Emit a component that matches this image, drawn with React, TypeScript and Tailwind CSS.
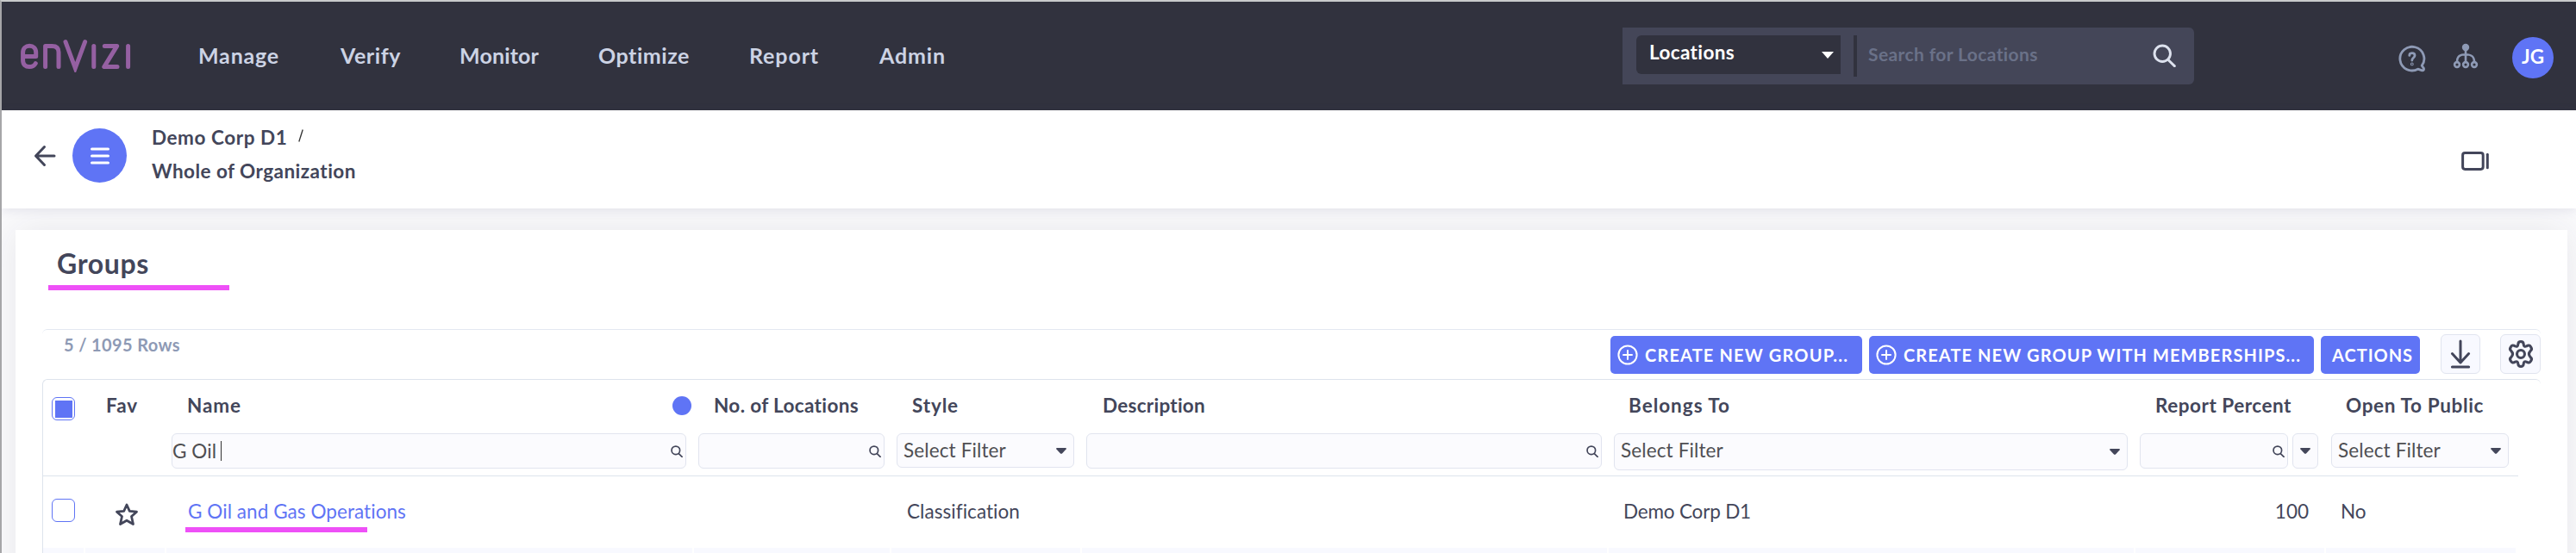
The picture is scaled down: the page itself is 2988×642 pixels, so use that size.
import type { ReactNode } from 'react';

const headText = 'block whitespace-nowrap text-[22.5px] leading-[28px] font-bold text-[#43465a]';
const cellText = 'block whitespace-nowrap text-[22.5px] leading-[28px] text-[#43465a]';
const columns = 'grid grid-cols-[49px_94px_612px_229px_221px_611px_611px_221px_220px]';

function Logo() {
  return (
    <svg className="h-[38px] w-[128px]" viewBox="24 46 128 38" fill="none" stroke="#9560a2" strokeWidth="5" strokeLinecap="round" strokeLinejoin="round">
      <path d="M27 65.5H41.7V61C41.7 56 38.5 53.2 34.2 53.2S26.6 56 26.6 61V70C26.6 75 29.5 77.6 34 77.6C37.6 77.6 40 76 41.3 73.6" />
      <path d="M52.6 77.5V53.4H60.5C65.5 53.4 68 56 68 60.5V77.5" />
      <path d="M76 48.6L87.3 79L98.6 48.6" strokeLinejoin="miter" />
      <path d="M108.8 53.4V77.5M121.3 53.4H135.7L120.8 77.6H136M148.6 53.4V77.5" />
    </svg>
  );
}

function Search({ className, width }: { className: string; width: number }) {
  return (
    <svg className={className} viewBox="0 0 24 24" fill="none" stroke="currentColor" strokeWidth={width} strokeLinecap="round">
      <circle cx="10" cy="10" r="8.2" />
      <path d="M16 16.5L22.5 22.8" />
    </svg>
  );
}

function Caret({ className }: { className: string }) {
  return (
    <svg className={className} viewBox="0 0 12 7" fill="currentColor" preserveAspectRatio="none">
      <path d="M0.8 0H11.2Q12.2 .5 11.6 1.4L7.2 6.3Q6 7.4 4.8 6.3L.4 1.4Q-.2 .5 .8 0Z" />
    </svg>
  );
}

function HelpIcon() {
  return (
    <svg className="h-8 w-8" viewBox="0 0 32 32" fill="none" stroke="#8e9ab5" strokeWidth="2.8" strokeLinecap="round" strokeLinejoin="round">
      <path d="M27.2 24.2A14 13.8 0 1 0 22.6 28.2L27.6 29.9Q30 29.6 29.4 27.4Z" />
      <path d="M12.8 12.4C12.8 10.4 14 9.6 15.8 9.6C17.8 9.6 19 10.7 19 12.4C19 15 15.8 15 15.8 18" />
      <circle cx="15.8" cy="22.4" r=".5" />
    </svg>
  );
}

function TreeIcon() {
  return (
    <svg className="h-[30px] w-[30px]" viewBox="0 0 30 30" fill="none" stroke="#8e9ab5" strokeWidth="2.6">
      <circle cx="15" cy="5" r="4.2" fill="#8e9ab5" stroke="none" />
      <path d="M15 8V22M5 22C5 15 8.5 13.2 15 13.2S25 15 25 22" />
      <circle cx="5" cy="25" r="2.9" />
      <circle cx="15" cy="25" r="2.9" />
      <circle cx="25" cy="25" r="2.9" />
    </svg>
  );
}

function PlusCircle() {
  return (
    <svg className="h-6 w-6 shrink-0" viewBox="0 0 24 24" fill="none" stroke="white" strokeWidth="2" strokeLinecap="round">
      <circle cx="12" cy="12" r="10.6" />
      <path d="M12 7V17M7 12H17" />
    </svg>
  );
}

function SearchField({ className, children }: { className: string; children?: ReactNode }) {
  return (
    <div className={`flex h-[41px] items-center rounded-md border border-[#e1e4ef] bg-[#fbfbfe] ${className}`}>
      {children}
      <Search className="mr-[3px] ml-auto h-[14px] w-[14px] text-[#43465a]" width={2.9} />
    </div>
  );
}

function SelectField({ className }: { className: string }) {
  return (
    <div className={`flex rounded-md border border-[#e1e4ef] bg-[#fbfbfe] pr-2 pl-[7px] ${className}`}>
      <span className="mt-[5px] whitespace-nowrap text-[22.5px] leading-[28px] tracking-[0.13px] text-[#4f4f52]">Select Filter</span>
      <Caret className="mt-[0.5px] ml-auto h-[7px] w-3 self-center text-[#43465a]" />
    </div>
  );
}

function ActionButton({ children, className }: { children: ReactNode; className: string }) {
  return (
    <button className={`flex h-11 items-center gap-2 rounded-[5px] bg-[#5f74f5] text-[20px] leading-[28px] font-bold whitespace-nowrap text-white ${className}`}>
      {children}
    </button>
  );
}

function Header() {
  return (
    <header className="flex h-[126px] items-start bg-[#31323e] text-[25px] leading-[32px] font-bold text-[#ccd3e4]">
      <div className="mt-[44px] ml-[22px] w-[206px]">
        <Logo />
      </div>
      <nav className="mt-[46px] flex whitespace-nowrap">
        <span className="w-[165px] tracking-[0.82px]">Manage</span>
        <span className="w-[138px] tracking-[0.57px]">Verify</span>
        <span className="w-[161px] tracking-[0.15px]">Monitor</span>
        <span className="w-[175px] tracking-[0.55px]">Optimize</span>
        <span className="w-[151px] tracking-[0.87px]">Report</span>
        <span className="tracking-[0.86px]">Admin</span>
      </nav>
      <div className="mt-[30px] ml-auto flex h-[66px] w-[663px] items-start rounded-r-md bg-[#444658] pt-[9px] pl-4">
        <div className="flex h-[45px] w-[237px] items-start rounded-l-md bg-[#31323e] pr-2 pl-[15px]">
          <span className="mt-[6px] text-[22.5px] leading-[28px] tracking-[0.36px] text-white">Locations</span>
          <svg className="mt-[19px] ml-auto h-2 w-[14px]" viewBox="0 0 14 8" fill="white">
            <path d="M0 0H14L7 8Z" />
          </svg>
        </div>
        <div className="ml-[15px] h-12 w-1 bg-[#31323e]" />
        <span className="mt-[8px] ml-[13px] text-[21px] leading-[28px] tracking-[0.39px] text-[#6a7188]">Search for Locations</span>
        <Search className="mt-[10px] mr-[21px] ml-auto h-[27px] w-[27px] text-[#dde2ee]" width={2.6} />
      </div>
      <div className="mr-[26px] ml-[237px] flex">
        <div className="mt-[50px] w-[63px]">
          <HelpIcon />
        </div>
        <div className="mt-[48px] w-[69px]">
          <TreeIcon />
        </div>
        <div className="mt-[41px] flex h-12 w-[48px] justify-center rounded-full bg-[#5f74f5] pt-[9px] text-[22.5px] leading-[28px] text-white">JG</div>
      </div>
    </header>
  );
}

function Breadcrumb() {
  return (
    <section className="relative z-10 flex h-[114px] items-start bg-white shadow-[0_2px_12px_rgba(60,60,110,0.12)]">
      <svg className="mt-[40px] ml-[37px] h-[26px] w-[26px]" viewBox="0 0 26 26" fill="none" stroke="#43465a" strokeWidth="3" strokeLinecap="round" strokeLinejoin="round">
        <path d="M24 13H2.5M12.5 2.5L2.5 13L12.5 23.5" />
      </svg>
      <div className="mt-[21px] ml-[19px] flex h-[63px] w-[63px] items-center justify-center rounded-full bg-[#5f74f5]">
        <svg className="h-5 w-[22px]" viewBox="0 0 22 20" stroke="white" strokeWidth="3" strokeLinecap="round">
          <path d="M1.5 2H20.5M1.5 10H20.5M1.5 18H20.5" />
        </svg>
      </div>
      <div className="mt-[18px] ml-[29px]">
        <div className="flex">
          <span className={`${headText} tracking-[0.56px]`}>Demo Corp D1</span>
          <svg className="mt-[4px] ml-[13px] h-[15px] w-[6px]" viewBox="0 0 6 15" stroke="#333" strokeWidth="1.3">
            <path d="M5.2 .5L.8 14.5" />
          </svg>
        </div>
        <span className={`${headText} mt-[11px] tracking-[0.46px]`}>Whole of Organization</span>
      </div>
      <svg className="mt-[48px] mr-[100px] ml-auto h-[22px] w-[33px]" viewBox="0 0 33 22" fill="none" stroke="#43465a" strokeWidth="3" strokeLinecap="round">
        <rect x="1.6" y="1.6" width="23.6" height="18.8" rx="2.6" />
        <path d="M30.3 3.2V18.8" />
      </svg>
    </section>
  );
}

function Toolbar() {
  return (
    <div className="flex h-[58px] w-[2898px] items-start rounded-t-md border-t border-[#e3e8f1]">
      <span className="mt-[3px] ml-[25px] text-[20px] leading-[28px] font-bold tracking-[0.37px] whitespace-nowrap text-[#8e9ab5]">5 / 1095 Rows</span>
      <div className="mt-[7px] ml-auto flex">
        <ActionButton className="w-[292px] pl-2 tracking-[1.16px]"><PlusCircle />CREATE NEW GROUP...</ActionButton>
        <ActionButton className="ml-2 w-[516px] pl-2 tracking-[1.09px]"><PlusCircle />CREATE NEW GROUP WITH MEMBERSHIPS...</ActionButton>
        <ActionButton className="ml-2 w-[115px] pl-[13px] tracking-[0.98px]">ACTIONS</ActionButton>
        <button className="-mt-[2px] ml-6 flex h-[46px] w-[46px] items-center justify-center rounded-md border border-[#e1e4ef] bg-[#f8f9ff]">
          <svg className="h-[34px] w-6" viewBox="0 0 24 34" fill="none" stroke="#43465a" strokeWidth="3" strokeLinecap="round" strokeLinejoin="round">
            <path d="M12 2V27M2.4 16.5L12 27L21.6 16.5M2.4 32H21.6" />
          </svg>
        </button>
        <button className="-mt-[2px] ml-[23px] flex h-[46px] w-[47px] items-center justify-center rounded-md border border-[#e1e4ef] bg-[#f8f9ff]">
          <svg className="h-[34px] w-[34px]" viewBox="0 0 32 32" fill="none" stroke="#43465a" strokeWidth="2.9" strokeLinejoin="round">
            <path d="M13 5.2Q13.2 2.4 16 2.4T19 5.2Q19.2 8.6 22.2 7.4Q25.4 5.4 27 8.4Q28.8 11 26.4 12.8Q23.4 16 26.4 19.2Q28.8 21 27 23.6Q25.4 26.6 22.2 24.6Q19.2 23.4 19 26.8Q18.8 29.6 16 29.6T13 26.8Q12.8 23.4 9.8 24.6Q6.6 26.6 5 23.6Q3.2 21 5.6 19.2Q8.6 16 5.6 12.8Q3.2 11 5 8.4Q6.6 5.4 9.8 7.4Q12.8 8.6 13 5.2Z" />
            <circle cx="16" cy="16" r="4.2" />
          </svg>
        </button>
      </div>
    </div>
  );
}

function GroupsTable() {
  return (
    <div className="w-[2898px] rounded-t-md border-t border-l border-[#dde3ec]">
      <div className={`${columns} h-[112px] w-[2871px] border-b border-[#dde3ec] pt-5`}>
        <div className="ml-[10px] flex h-[27px] w-[27px] items-center justify-center rounded-[6px] border border-[#5f74f5]">
          <div className="h-5 w-5 bg-[#5f74f5]" />
        </div>
        <span className={`${headText} -mt-[4px] ml-[24px] tracking-[0.92px]`}>Fav</span>
        <div>
          <div className="-mt-[4px] flex h-[28px] items-center">
            <span className={`${headText} ml-[24px] tracking-[0.92px]`}>Name</span>
            <div className="mr-[3px] ml-auto h-[22px] w-[22px] rounded-full bg-[#5f74f5]" />
          </div>
          <SearchField className="mt-[18px] ml-[6px] w-[597px]">
            <span className="mt-px text-[22.5px] leading-[28px] tracking-[0.06px] whitespace-nowrap text-[#4f4f52]">G Oil</span>
            <div className="ml-[5px] h-[23px] w-px bg-[#333]" />
          </SearchField>
        </div>
        <div>
          <span className={`${headText} -mt-[4px] ml-[23px] tracking-[0.36px]`}>No. of Locations</span>
          <SearchField className="mt-[18px] ml-[5px] w-[216px]" />
        </div>
        <div>
          <span className={`${headText} -mt-[4px] ml-[24px] tracking-[0.86px]`}>Style</span>
          <SelectField className="mt-[18px] ml-[6px] h-10 w-[206px]" />
        </div>
        <div>
          <span className={`${headText} -mt-[4px] ml-[24px] tracking-[0.26px]`}>Description</span>
          <SearchField className="mt-[18px] ml-[5px] w-[598px]" />
        </div>
        <div>
          <span className={`${headText} -mt-[4px] ml-[23px] tracking-[0.98px]`}>Belongs To</span>
          <SelectField className="mt-[18px] ml-[6px] h-[43px] w-[596px]" />
        </div>
        <div>
          <span className={`${headText} -mt-[4px] ml-[23px] tracking-[0.52px]`}>Report Percent</span>
          <div className="mt-[18px] ml-[5px] flex gap-[5px]">
            <SearchField className="w-[172px]" />
            <div className="flex h-[41px] w-[30px] items-center justify-center rounded-md border border-[#e1e4ef] bg-[#fbfbfe]">
              <Caret className="h-[7px] w-3 text-[#43465a]" />
            </div>
          </div>
        </div>
        <div>
          <span className={`${headText} -mt-[4px] ml-[23px] tracking-[0.65px]`}>Open To Public</span>
          <SelectField className="mt-[18px] ml-[6px] h-10 w-[206px]" />
        </div>
      </div>

      <div className={`${columns} h-[83px] items-start`}>
        <div className="mt-[26px] ml-[10px] h-[27px] w-[27px] rounded-[6px] border border-[#5f74f5]" />
        <svg className="mt-[30px] ml-[34px] h-[28px] w-[28px]" viewBox="0 0 28 28" fill="none" stroke="#43465a" strokeWidth="2.8" strokeLinejoin="round">
          <path d="M14 3L17.3 10.3L25.5 11.2L19.5 16.5L21.5 25.5L14 21.2L6.5 25.5L8.5 16.5L2.5 11.2L10.7 10.3Z" />
        </svg>
        <div className="mt-[27px] ml-[22px]">
          <span className="ml-[3px] block text-[22.5px] leading-[28px] tracking-[0.06px] whitespace-nowrap text-[#5f74f5]">G Oil and Gas Operations</span>
          <div className="mt-[4px] h-[6px] w-[211px] bg-[#ee50f7]" />
        </div>
        <span />
        <span className={`${cellText} mt-[27px] ml-[18px] tracking-[0.05px]`}>Classification</span>
        <span />
        <span className={`${cellText} mt-[27px] ml-[17px] tracking-[-0.18px]`}>Demo Corp D1</span>
        <span className={`${cellText} mt-[27px] mr-[20px] text-right`}>100</span>
        <span className={`${cellText} mt-[27px] ml-[17px]`}>No</span>
      </div>

      <div className={`${columns} h-5 w-[2868px] divide-x-2 divide-white bg-[#f8f9ff]`}>
        {Array.from({ length: 9 }, (_, i) => (
          <div key={i} />
        ))}
      </div>
    </div>
  );
}

export default function App() {
  return (
    <div className="h-[642px] w-[2988px] overflow-hidden border-t-2 border-l-2 border-t-[#c9cbcb] border-l-[#a6a6a8] bg-[#fafafc] font-['Lato',sans-serif] [font-variant-ligatures:none]">
      <Header />
      <Breadcrumb />
      <main className="mt-[25px] ml-4 h-[420px] w-[2960px] bg-white pt-[20px] shadow-[0_0_40px_rgba(40,40,60,0.09)]">
        <div className="ml-[38px]">
          <h1 className="ml-[10px] text-[32px] leading-[38px] font-bold tracking-[0.64px] text-[#43465a]">Groups</h1>
          <div className="mt-[6px] h-[6px] w-[210px] bg-[#ee50f7]" />
        </div>
        <div className="mt-[45px] ml-[31px]">
          <Toolbar />
          <GroupsTable />
        </div>
      </main>
    </div>
  );
}
